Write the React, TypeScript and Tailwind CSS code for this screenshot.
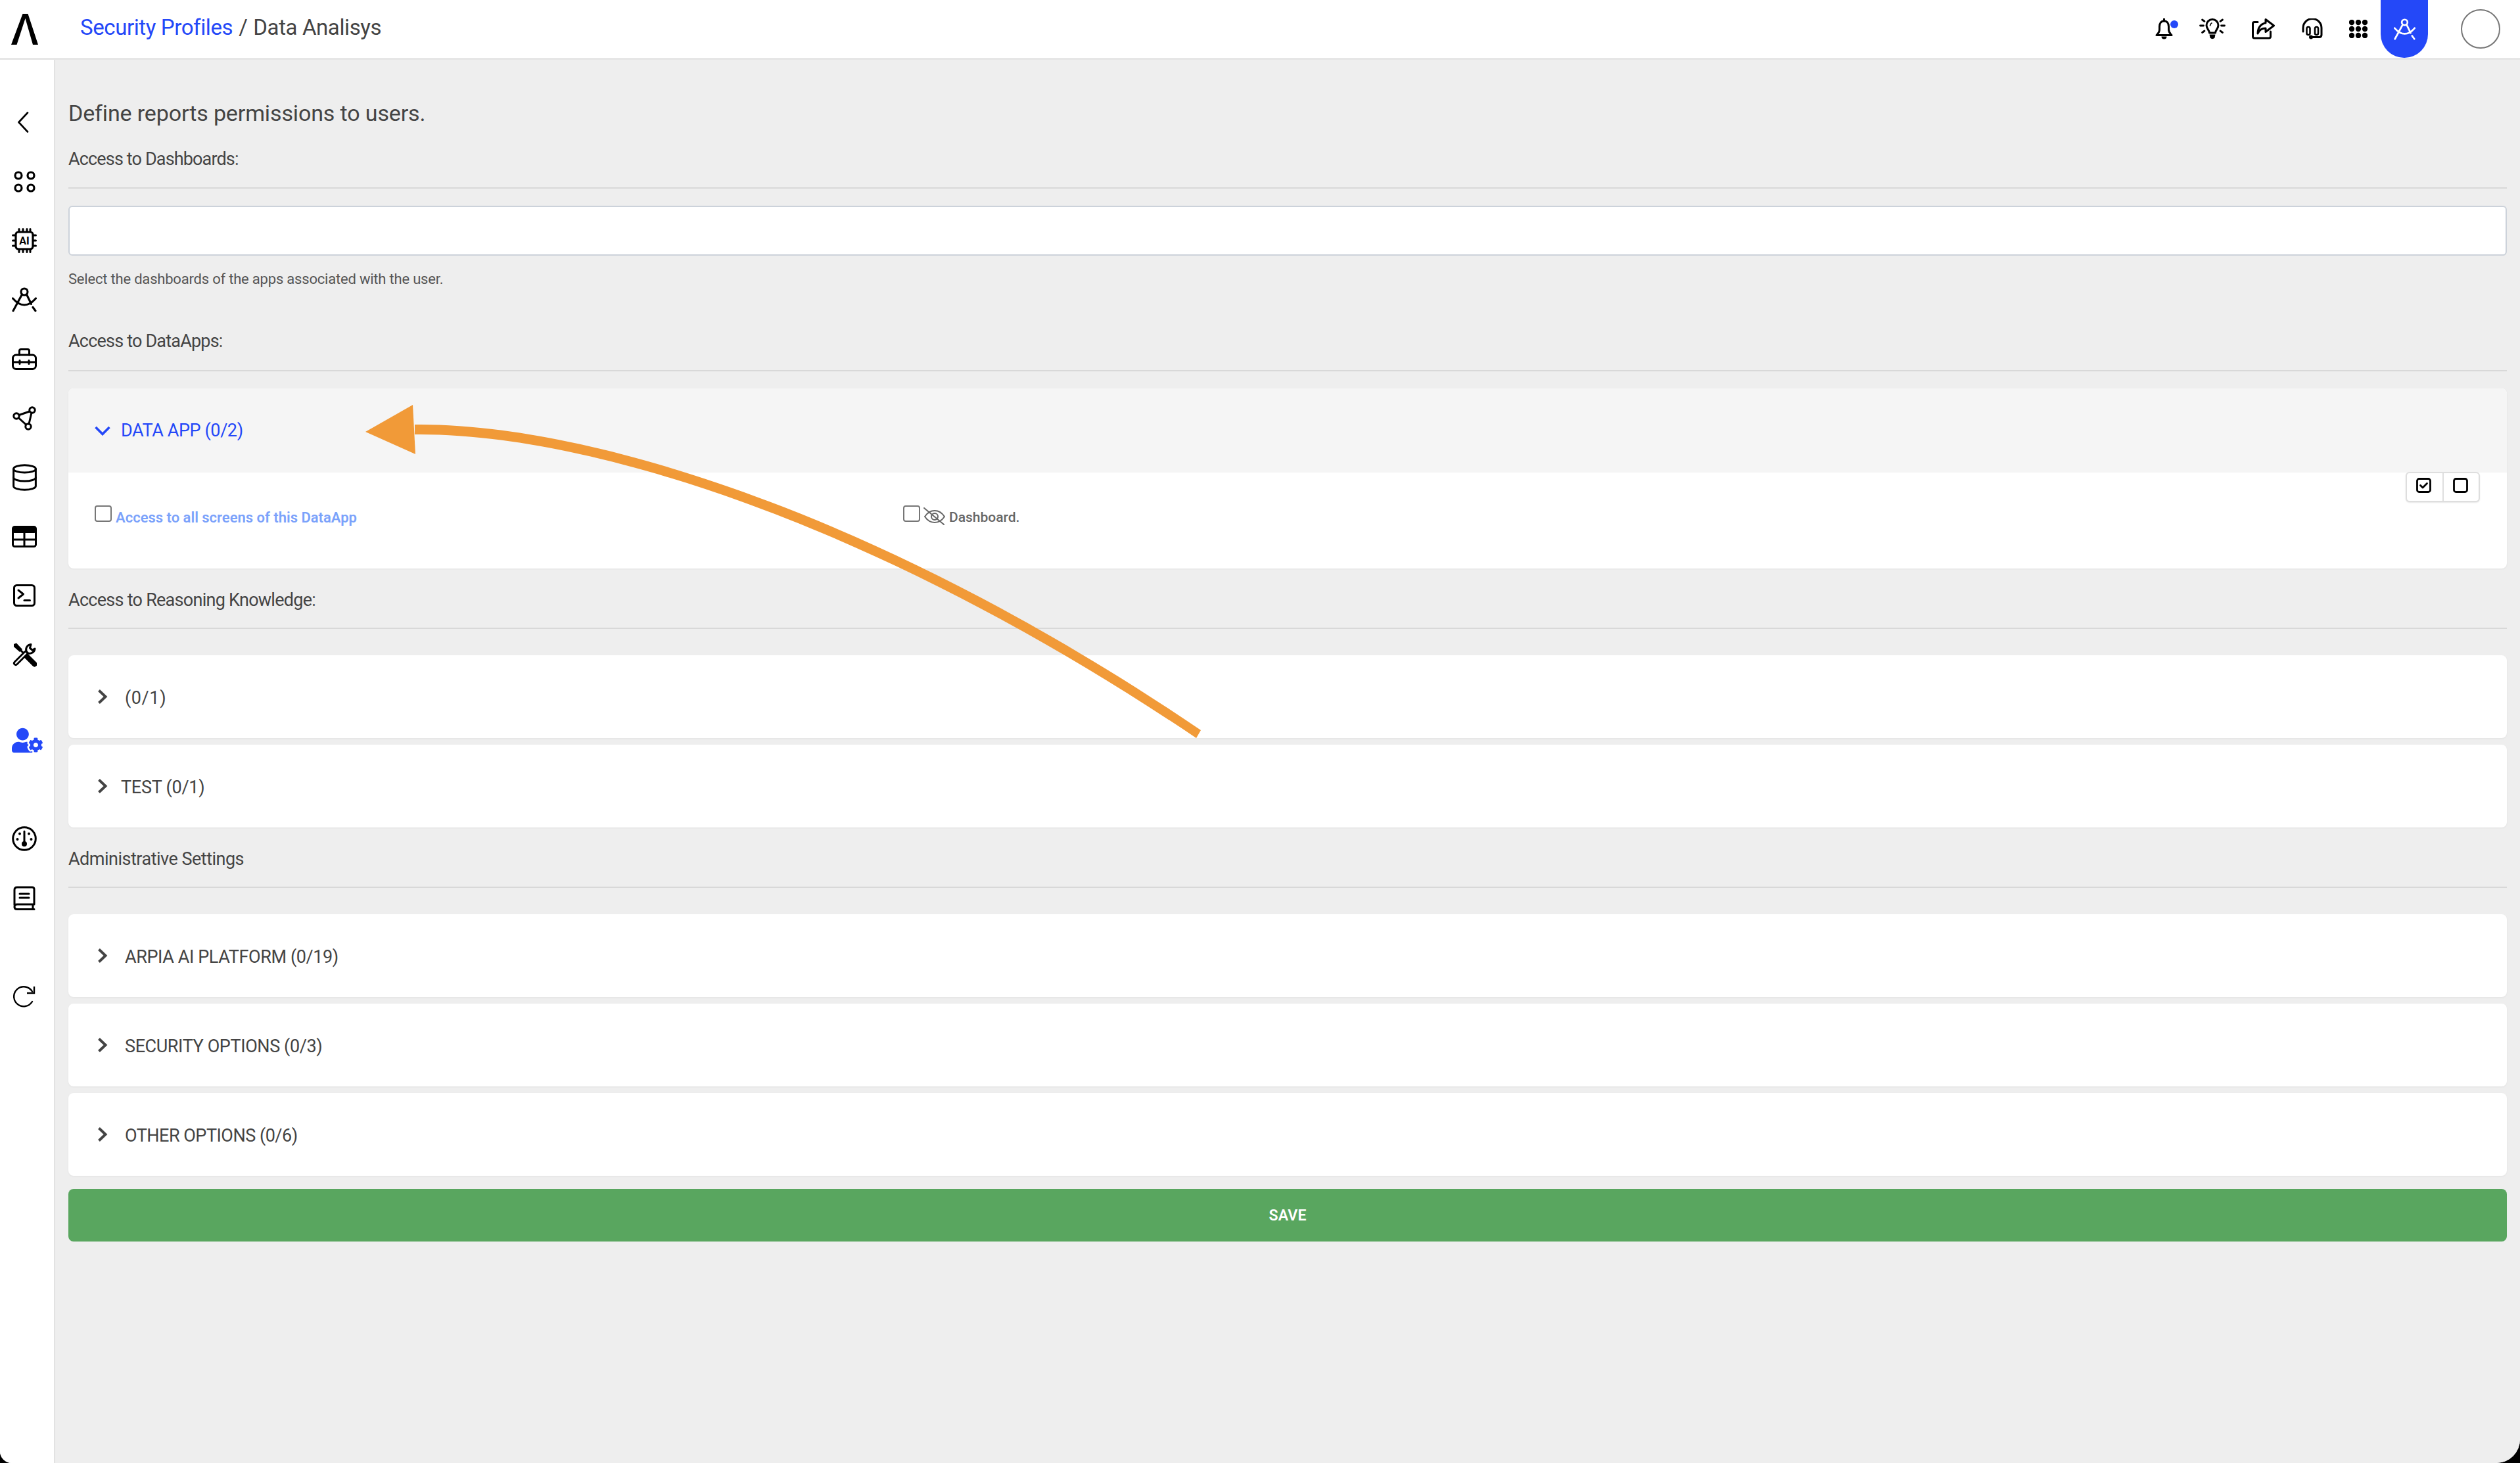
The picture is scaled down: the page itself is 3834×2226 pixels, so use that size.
import React from "react";
import { FaUserCog } from "react-icons/fa";
import { Database } from "lucide-react";

const S = { fill: "none", stroke: "currentColor", strokeLinecap: "round" as const, strokeLinejoin: "round" as const };

function Logo() {
  return (
    <svg width="41" height="47" viewBox="17 20 41 47" className="text-black">
      <path d="M34.5 20 L42.5 20 L58 67 L50 67 L38.5 27 L25.5 67 L17 67 Z" fill="currentColor" />
    </svg>
  );
}
const Compass = ({ w, h }: { w: number; h: number }) => (
  <svg width={w} height={h} viewBox="0 0 38 38" {...S} strokeWidth="3.1">
    <circle cx="19" cy="7" r="5" />
    <path d="M15.5 11L2 36" />
    <path d="M22.5 11L29.5 25.5" />
    <path d="M32 30.5L36 36" />
    <path d="M1.5 17Q19 37 36.5 17" />
  </svg>
);
const Back = () => (
  <svg width="18" height="32" viewBox="0 0 18 32"><path d="M16 1.5 L2.5 16 L16 30.5" {...S} strokeWidth="2.6" /></svg>
);
const Apps = () => (
  <svg width="33" height="33" viewBox="0 0 33 33" {...S} strokeWidth="3.2">
    <circle cx="7" cy="7" r="5" /><circle cx="26" cy="7" r="5" /><circle cx="7" cy="26" r="5" /><circle cx="26" cy="26" r="5" />
  </svg>
);
const Chip = () => (
  <svg width="38" height="38" viewBox="0 0 38 38">
    <rect x="6" y="6" width="26" height="26" rx="4" {...S} strokeWidth="3.2" />
    <path d="M11 1.5V5M17 1.5V5M23 1.5V5M28 1.5V5M11 33V36.5M17 33V36.5M23 33V36.5M28 33V36.5M1.5 11H5M1.5 19H5M1.5 27H5M33 11H36.5M33 19H36.5M33 27H36.5" {...S} strokeWidth="3" />
    <text x="19" y="25" textAnchor="middle" fontFamily="Roboto, sans-serif" fontWeight="700" fontSize="16" fill="currentColor">AI</text>
  </svg>
);
const Toolbox = () => (
  <svg width="38" height="33" viewBox="0 0 38 33" {...S} strokeWidth="3">
    <rect x="1.5" y="10" width="35" height="21.5" rx="5" />
    <path d="M11.5 10V4Q11.5 1.5 14 1.5H24Q26.5 1.5 26.5 4V10" />
    <path d="M1.5 21H36.5M12 18.5V23.5M26 18.5V23.5" />
  </svg>
);
const Graph = () => (
  <svg width="36" height="37" viewBox="0 0 36 37" {...S} strokeWidth="3">
    <circle cx="30" cy="6" r="4.2" /><circle cx="6" cy="15" r="4.2" /><circle cx="24" cy="31" r="4.2" />
    <path d="M26 8L10 13.5M9.5 18L20.5 28M29 10L25 27" />
  </svg>
);
const TableI = () => (
  <svg width="38" height="33" viewBox="0 0 38 33">
    <rect x="1.5" y="1.5" width="35" height="30" rx="3" {...S} strokeWidth="3" />
    <rect x="1" y="1" width="36" height="10" rx="3" fill="currentColor" />
    <path d="M1.5 21H36.5M19 10V32" {...S} strokeWidth="3" strokeLinecap="butt" />
  </svg>
);
const Term = () => (
  <svg width="34" height="34" viewBox="0 0 34 34" {...S} strokeWidth="3">
    <rect x="1.5" y="1.5" width="31" height="31" rx="4" />
    <path d="M8 9L15.5 15L8 21" /><path d="M17 24.5H25.5" />
  </svg>
);
const Tools = () => (
  <svg width="38" height="38" viewBox="0 0 38 38">
    <path d="M3 3L7 1.5L16 11L12 15L3 7Z" fill="currentColor" />
    <path d="M12 11L24 23" {...S} strokeWidth="3" />
    <path d="M22 21L34.5 33.5" {...S} strokeWidth="8" />
    <path d="M6 32L21 17" {...S} strokeWidth="8" />
    <path d="M6 32L21 17" {...S} strokeWidth="2.4" stroke="#fff" />
    <path d="M29 3.5 A8 8 0 0 0 22 14 L25 17 A8 8 0 0 0 35 10 L31 12 L27.5 9 Z" {...S} strokeWidth="3" />
  </svg>
);
const Gauge = () => (
  <svg width="38" height="38" viewBox="0 0 38 38">
    <circle cx="19" cy="19" r="17.3" {...S} strokeWidth="3" />
    <path d="M19 8V25" {...S} strokeWidth="3" />
    <circle cx="19" cy="27" r="4" fill="currentColor" />
    <circle cx="8.5" cy="20" r="2" fill="currentColor" /><circle cx="12" cy="11.5" r="2" fill="currentColor" />
    <circle cx="26" cy="11.5" r="2" fill="currentColor" /><circle cx="29.5" cy="20" r="2" fill="currentColor" />
  </svg>
);
const Book = () => (
  <svg width="34" height="37" viewBox="0 0 34 37" {...S} strokeWidth="3">
    <path d="M2 29V6Q2 2 6 2H29Q32 2 32 5V28H6Q2 28 2 32Q2 35.5 6 35.5H32" />
    <path d="M10 12H24M10 18H24" />
    <path d="M30 29V35" />
  </svg>
);
const Refresh = () => (
  <svg width="34" height="33" viewBox="0 0 34 33" {...S} strokeWidth="2.4">
    <path d="M29 8.5A15 15 0 1 0 29 24" /><path d="M32 1V11H21" strokeLinecap="butt" strokeLinejoin="miter" />
  </svg>
);
const Bell = () => (
  <svg width="27" height="32" viewBox="0 0 27 32">
    <path d="M13.5 4C8.5 4 6.5 8 6.5 12.5V17C6.5 21 4.5 23 2 25.5H25C22.5 23 20.5 21 20.5 17V12.5C20.5 8 18.5 4 13.5 4Z" {...S} strokeWidth="3" />
    <path d="M13.5 0.5V4" {...S} strokeWidth="3" />
    <path d="M9.5 27.5H17.5A4 4 0 0 1 9.5 27.5Z" fill="currentColor" />
  </svg>
);
const Bulb = () => (
  <svg width="40" height="32" viewBox="0 0 40 32">
    <path d="M15.5 22C15.5 18 11 16 11 10.5A9 9 0 0 1 29 10.5C29 16 24.5 18 24.5 22Z" {...S} strokeWidth="3" />
    <path d="M15.5 24.5H24.5L23.5 29.5Q20 33 16.5 29.5Z" fill="currentColor" />
    <path d="M1.5 11H6.5M33.5 11H38.5M4.5 2L8 4.5M35.5 2L32 4.5M4.5 21.5L8 19M35.5 21.5L32 19" {...S} strokeWidth="2.8" />
    <path d="M16.5 11Q17 8 19 7" {...S} strokeWidth="1.6" />
  </svg>
);
const Share = () => (
  <svg width="35" height="32" viewBox="0 0 35 32" {...S} strokeWidth="3">
    <path d="M9 5.5H4Q1.5 5.5 1.5 8V27.5Q1.5 30 4 30H26Q28.5 30 28.5 27.5V20" />
    <path d="M21 1.5L33.5 11L21 20.5V15C15 15 11 18 9 23C9 14 14 8 21 7Z" />
  </svg>
);
const Headset = () => (
  <svg width="32" height="32" viewBox="0 0 32 32" {...S} strokeWidth="3">
    <path d="M2 20V14.5A14 14 0 0 1 30 14.5V25Q30 28.5 26.5 28.5H15" />
    <circle cx="14" cy="28.5" r="3" fill="currentColor" stroke="none" />
    <rect x="7.5" y="13" width="5" height="12" rx="2.5" strokeWidth="2.6" />
    <rect x="20" y="13" width="5" height="12" rx="2.5" strokeWidth="2.6" />
  </svg>
);
const Dots = () => (
  <svg width="28" height="28" viewBox="0 0 28 28" fill="currentColor">
    {[4, 14, 24].map((y) => [4, 14, 24].map((x) => <circle key={`${x}-${y}`} cx={x} cy={y} r="4.2" />))}
  </svg>
);
const ChevRight = () => (
  <svg width="16" height="22" viewBox="0 0 16 22" className="text-[#444]"><path d="M2.5 1.5L12.5 11L2.5 20.5" {...S} strokeWidth="4" strokeLinecap="butt" strokeLinejoin="miter" /></svg>
);
const ChevDown = () => (
  <svg width="24" height="15" viewBox="0 0 24 15" className="text-[#2448f8]"><path d="M1.5 2L12 12.5L22.5 2" {...S} strokeWidth="3.6" strokeLinecap="butt" strokeLinejoin="miter" /></svg>
);
const EyeOff = () => (
  <svg width="33" height="27" viewBox="0 0 33 27" {...S} strokeWidth="2">
    <path d="M2 14C6 8 11 5 17 5C23 5 28 8 32 14C28 20 23 23 17 23C11 23 6 20 2 14Z" />
    <circle cx="17" cy="14" r="5" />
    <path d="M1 1L31 26" />
  </svg>
);

const SideRow = ({ className = "", children }: { className?: string; children: React.ReactNode }) => (
  <div className={`flex h-[90px] w-[74px] items-center justify-center ${className}`}>{children}</div>
);

const SectionTitle = ({ className, children }: { className: string; children: React.ReactNode }) => (
  <div className={`h-[30px] pt-[1px] text-[27px] leading-[30px] text-[#444] [font-stretch:88%] ${className}`}>{children}</div>
);
const Hr = ({ className }: { className: string }) => <div className={`h-[2px] bg-[#d8d8d8] ${className}`} />;

const Row = ({ label, textClass, className = "" }: { label: string; textClass: string; className?: string }) => (
  <div className={`flex h-[126px] items-center rounded-lg bg-white pl-[44px] shadow-[0_1px_3px_rgba(0,0,0,0.05)] ${className}`}>
    <ChevRight />
    <span className={`pt-[5px] text-[27px] text-[#444] [font-stretch:88%] ${textClass}`}>{label}</span>
  </div>
);

export default function App() {
  return (
    <div className="h-[2226px] w-[3834px] overflow-hidden bg-black font-['Roboto',sans-serif]">
      <div className="flex h-full w-full flex-col overflow-hidden rounded-br-[36px] rounded-bl-[18px] bg-white">
        <header className="box-content flex h-[88px] items-center border-b-[3px] border-[#e6e6e6] bg-white pr-[30px] pl-[17px]">
          <Logo />
          <div className="mb-[4px] ml-[64px] text-[33px] tracking-[-0.4px] text-[#444] [font-stretch:88%]">
            <span className="text-[#2448f8]">Security Profiles</span><span className="mx-[9px]">/</span>Data Analisys
          </div>
          <div className="ml-auto flex h-full items-center text-black">
            <div className="relative">
              <Bell />
              <div className="absolute top-[3px] right-[-8px] h-[12px] w-[12px] rounded-full bg-[#2448f8]" />
            </div>
            <div className="ml-[40px]"><Bulb /></div>
            <div className="ml-[40px]"><Share /></div>
            <div className="ml-[41px]"><Headset /></div>
            <div className="ml-[40px]"><Dots /></div>
            <div className="ml-[20px] flex h-full w-[72px] items-center justify-center rounded-b-[36px] bg-[#2448f8] text-white">
              <Compass w={33} h={33} />
            </div>
            <div className="ml-[50px] h-[60px] w-[60px] rounded-full border-2 border-[#777] bg-white" />
          </div>
        </header>

        <div className="flex min-h-0 flex-1">
          <aside className="flex w-[84px] flex-col border-r-2 border-[#e2e2e2] bg-white pt-[50px] text-black">
            <SideRow className="pr-[5px]"><Back /></SideRow>
            <SideRow><Apps /></SideRow>
            <SideRow><Chip /></SideRow>
            <SideRow><Compass w={38} h={38} /></SideRow>
            <SideRow><Toolbox /></SideRow>
            <SideRow><Graph /></SideRow>
            <SideRow><Database size={45} strokeWidth={1.6} /></SideRow>
            <SideRow><TableI /></SideRow>
            <SideRow><Term /></SideRow>
            <SideRow><Tools /></SideRow>
            <SideRow className="mt-[40px] pl-[9px] text-[#2448f8]"><FaUserCog size={47} /></SideRow>
            <SideRow className="mt-[60px]"><Gauge /></SideRow>
            <SideRow><Book /></SideRow>
            <SideRow className="mt-[60px]"><Refresh /></SideRow>
          </aside>

          <main className="relative min-w-0 flex-1 bg-[#eeeeee] pt-[61px] pr-[20px] pl-[20px]">
            <div className="h-[40px] text-[34px] leading-[40px] tracking-[-0.13px] text-[#444] [font-stretch:88%]">Define reports permissions to users.</div>
            <SectionTitle className="mt-[34px] tracking-[-0.85px]">Access to Dashboards:</SectionTitle>
            <Hr className="mt-[29px]" />
            <div className="mt-[26px] h-[76px] rounded-md border-2 border-[#ccd2da] bg-white" />
            <div className="mt-[21px] h-[30px] text-[22px] leading-[30px] tracking-[-0.2px] text-[#555] [font-stretch:88%]">Select the dashboards of the apps associated with the user.</div>
            <SectionTitle className="mt-[63px] tracking-[-0.8px]">Access to DataApps:</SectionTitle>
            <Hr className="mt-[30px]" />

            <div className="relative mt-[26px] overflow-hidden rounded-lg bg-white shadow-[0_1px_3px_rgba(0,0,0,0.05)]">
              <div className="flex h-[128px] items-center bg-[#f5f5f5] pl-[40px]">
                <ChevDown />
                <span className="ml-[16px] pt-[1px] text-[27px] tracking-[-0.4px] text-[#2448f8] [font-stretch:88%]">DATA APP (0/2)</span>
              </div>
              <div className="flex h-[146px] items-start pt-[50px] pl-[40px]">
                <div className="flex w-[1230px] items-start">
                  <div className="h-[25px] w-[26px] rounded-[4px] border-2 border-[#767676] bg-white" />
                  <span className="mt-[5px] ml-[6px] text-[22px] leading-[28px] font-semibold tracking-[0px] text-[#7ba2fb] [font-stretch:88%]">Access to all screens of this DataApp</span>
                </div>
                <div className="flex items-start">
                  <div className="h-[25px] w-[26px] rounded-[4px] border-2 border-[#767676] bg-white" />
                  <div className="mt-[3px] ml-[5px] text-[#666]"><EyeOff /></div>
                  <span className="mt-[4px] ml-[6px] text-[21px] leading-[28px] font-medium tracking-[0px] text-[#666] [font-stretch:88%]">Dashboard.</span>
                </div>
              </div>
              <div className="absolute top-[127px] right-[41px] flex h-[46px] w-[113px] rounded-md border-2 border-[#dedede] bg-white pb-[5px] text-black shadow-[0_1px_2px_rgba(0,0,0,0.1)]">
                <div className="flex w-[54px] items-center justify-center pr-[3px]">
                  <svg width="23" height="23" viewBox="0 0 23 23" {...S} strokeWidth="2.8">
                    <rect x="1.5" y="1.5" width="20" height="20" rx="3" /><path d="M6.5 11.5L10 15L16.5 8.5" />
                  </svg>
                </div>
                <div className="absolute top-0 bottom-0 left-[54px] w-[2px] bg-[#dedede]" />
                <div className="flex flex-1 items-center justify-center">
                  <svg width="23" height="23" viewBox="0 0 23 23" {...S} strokeWidth="2.8"><rect x="1.5" y="1.5" width="20" height="20" rx="3" /></svg>
                </div>
              </div>
            </div>

            <SectionTitle className="mt-[32px] tracking-[-0.73px]">Access to Reasoning Knowledge:</SectionTitle>
            <Hr className="mt-[28px]" />
            <Row label="(0/1)" textClass="ml-[26px] tracking-[0.6px]" className="mt-[40px]" />
            <Row label="TEST (0/1)" textClass="ml-[20px] tracking-[-0.25px]" className="mt-[10px]" />

            <SectionTitle className="mt-[32px] tracking-[-0.5px]">Administrative Settings</SectionTitle>
            <Hr className="mt-[28px]" />
            <Row label="ARPIA AI PLATFORM (0/19)" textClass="ml-[26px] tracking-[-0.4px]" className="mt-[40px]" />
            <Row label="SECURITY OPTIONS (0/3)" textClass="ml-[26px] tracking-[-0.4px]" className="mt-[10px]" />
            <Row label="OTHER OPTIONS (0/6)" textClass="ml-[26px] tracking-[-0.5px]" className="mt-[10px]" />

            <button className="mt-[20px] flex h-[80px] w-full items-center justify-center rounded-lg bg-[#59a65f] pt-[3px] text-[23px] font-semibold tracking-[0.2px] text-white [font-stretch:88%]">SAVE</button>

            <svg className="pointer-events-none absolute top-[-91px] left-[-84px] h-[1300px] w-[2000px]" viewBox="0 0 2000 1300">
              <path d="M631 646C870 643 1314 763 1827 1111L1820 1123C1306 777 870 658 631 661Z" fill="#f19a38" />
              <path d="M556 657L628 616L632 691Z" fill="#f19a38" />
            </svg>
          </main>
        </div>
      </div>
    </div>
  );
}
